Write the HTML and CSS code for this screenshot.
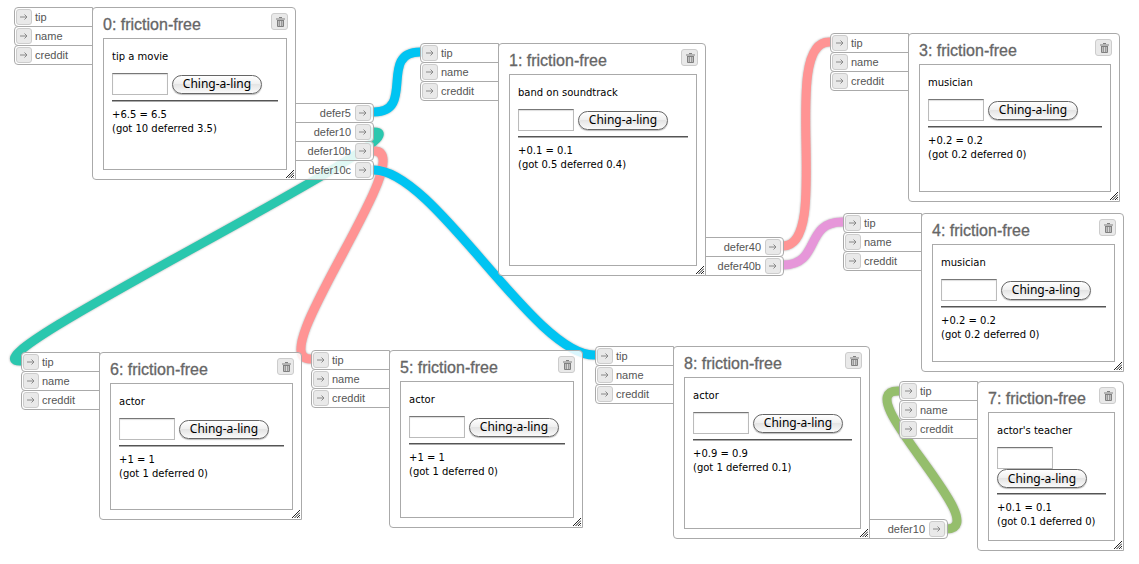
FILE: index.html
```html
<!DOCTYPE html>
<html lang="en">
<head>
<meta charset="utf-8">
<title>friction-free</title>
<link rel="stylesheet" href="styles.css">
</head>
<body>
<svg class="symbols" aria-hidden="true">
  <symbol id="arrow" viewBox="0 0 8 8"><path d="M0 4h7M4.500 1.500L7 4L4.500 6.500" fill="none" stroke="#888" stroke-width="1"/></symbol>
  <symbol id="trash" viewBox="0 0 9 10"><path d="M0 1.500h9v1H0zM3 0h3v1H3zM1 3h7v6.200L7.300 10H1.700L1 9.200z" fill="#808080"/><path d="M2.800 4v5M4.500 4v5M6.200 4v5" stroke="#eee" stroke-width=".8"/></symbol>
  <symbol id="grip" viewBox="0 0 8 8"><path d="M0 8L8 0M2.500 8L8 2.500M5 8L8 5M7 8.500L8.500 7" fill="none" stroke="#222" stroke-width="1"/></symbol>
</svg>
<main class="canvas">
  <svg class="wires" aria-hidden="true">
    <path class="teal" d="M364 132H374C434 132 -42 361 20 361H30"/>
    <path class="red" d="M364 151H374C422 151 262 359 310 359H320"/>
    <path class="blue" d="M364 112H374C416 112 378 52 420 52H429"/>
    <path class="blue" d="M364 170H374C434 170 534 355 594 355H604"/>
    <path class="red" d="M773 246H783C833 246 779 42 829 42H839"/>
    <path class="pink" d="M773 265H783C821 265 804 222 842 222H852"/>
    <path class="green" d="M936 529H946C998 529 846 391 898 391H908"/>
  </svg>

  <section class="node node-0">
    <div class="ports ins">
      <label class="port"><button><svg><use href="#arrow"/></svg></button>tip</label>
      <label class="port"><button><svg><use href="#arrow"/></svg></button>name</label>
      <label class="port"><button><svg><use href="#arrow"/></svg></button>creddit</label>
    </div>
    <div class="module">
      <header><h2>0: friction-free</h2><button class="trash" aria-label="Delete"><svg><use href="#trash"/></svg></button></header>
      <div class="frame">
        <label class="caption" for="amount-0">tip a movie</label>
        <div class="pay"><input type="text" id="amount-0"><button class="ching">Ching-a-ling</button></div>
        <hr>
        <p>+6.5 = 6.5<br>(got 10 deferred 3.5)</p>
      </div>
      <svg class="grip"><use href="#grip"/></svg>
    </div>
    <div class="ports outs">
      <label class="port">defer5<button><svg><use href="#arrow"/></svg></button></label>
      <label class="port">defer10<button><svg><use href="#arrow"/></svg></button></label>
      <label class="port">defer10b<button><svg><use href="#arrow"/></svg></button></label>
      <label class="port">defer10c<button><svg><use href="#arrow"/></svg></button></label>
    </div>
  </section>

  <section class="node node-1">
    <div class="ports ins">
      <label class="port"><button><svg><use href="#arrow"/></svg></button>tip</label>
      <label class="port"><button><svg><use href="#arrow"/></svg></button>name</label>
      <label class="port"><button><svg><use href="#arrow"/></svg></button>creddit</label>
    </div>
    <div class="module">
      <header><h2>1: friction-free</h2><button class="trash" aria-label="Delete"><svg><use href="#trash"/></svg></button></header>
      <div class="frame">
        <label class="caption" for="amount-1">band on soundtrack</label>
        <div class="pay"><input type="text" id="amount-1"><button class="ching">Ching-a-ling</button></div>
        <hr>
        <p>+0.1 = 0.1<br>(got 0.5 deferred 0.4)</p>
      </div>
      <svg class="grip"><use href="#grip"/></svg>
    </div>
    <div class="ports outs">
      <label class="port">defer40<button><svg><use href="#arrow"/></svg></button></label>
      <label class="port">defer40b<button><svg><use href="#arrow"/></svg></button></label>
    </div>
  </section>

  <section class="node node-3">
    <div class="ports ins">
      <label class="port"><button><svg><use href="#arrow"/></svg></button>tip</label>
      <label class="port"><button><svg><use href="#arrow"/></svg></button>name</label>
      <label class="port"><button><svg><use href="#arrow"/></svg></button>creddit</label>
    </div>
    <div class="module">
      <header><h2>3: friction-free</h2><button class="trash" aria-label="Delete"><svg><use href="#trash"/></svg></button></header>
      <div class="frame">
        <label class="caption" for="amount-3">musician</label>
        <div class="pay"><input type="text" id="amount-3"><button class="ching">Ching-a-ling</button></div>
        <hr>
        <p>+0.2 = 0.2<br>(got 0.2 deferred 0)</p>
      </div>
      <svg class="grip"><use href="#grip"/></svg>
    </div>
  </section>

  <section class="node node-4">
    <div class="ports ins">
      <label class="port"><button><svg><use href="#arrow"/></svg></button>tip</label>
      <label class="port"><button><svg><use href="#arrow"/></svg></button>name</label>
      <label class="port"><button><svg><use href="#arrow"/></svg></button>creddit</label>
    </div>
    <div class="module">
      <header><h2>4: friction-free</h2><button class="trash" aria-label="Delete"><svg><use href="#trash"/></svg></button></header>
      <div class="frame">
        <label class="caption" for="amount-4">musician</label>
        <div class="pay"><input type="text" id="amount-4"><button class="ching">Ching-a-ling</button></div>
        <hr>
        <p>+0.2 = 0.2<br>(got 0.2 deferred 0)</p>
      </div>
      <svg class="grip"><use href="#grip"/></svg>
    </div>
  </section>

  <section class="node node-5">
    <div class="ports ins">
      <label class="port"><button><svg><use href="#arrow"/></svg></button>tip</label>
      <label class="port"><button><svg><use href="#arrow"/></svg></button>name</label>
      <label class="port"><button><svg><use href="#arrow"/></svg></button>creddit</label>
    </div>
    <div class="module">
      <header><h2>5: friction-free</h2><button class="trash" aria-label="Delete"><svg><use href="#trash"/></svg></button></header>
      <div class="frame">
        <label class="caption" for="amount-5">actor</label>
        <div class="pay"><input type="text" id="amount-5"><button class="ching">Ching-a-ling</button></div>
        <hr>
        <p>+1 = 1<br>(got 1 deferred 0)</p>
      </div>
      <svg class="grip"><use href="#grip"/></svg>
    </div>
  </section>

  <section class="node node-6">
    <div class="ports ins">
      <label class="port"><button><svg><use href="#arrow"/></svg></button>tip</label>
      <label class="port"><button><svg><use href="#arrow"/></svg></button>name</label>
      <label class="port"><button><svg><use href="#arrow"/></svg></button>creddit</label>
    </div>
    <div class="module">
      <header><h2>6: friction-free</h2><button class="trash" aria-label="Delete"><svg><use href="#trash"/></svg></button></header>
      <div class="frame">
        <label class="caption" for="amount-6">actor</label>
        <div class="pay"><input type="text" id="amount-6"><button class="ching">Ching-a-ling</button></div>
        <hr>
        <p>+1 = 1<br>(got 1 deferred 0)</p>
      </div>
      <svg class="grip"><use href="#grip"/></svg>
    </div>
  </section>

  <section class="node node-7">
    <div class="ports ins">
      <label class="port"><button><svg><use href="#arrow"/></svg></button>tip</label>
      <label class="port"><button><svg><use href="#arrow"/></svg></button>name</label>
      <label class="port"><button><svg><use href="#arrow"/></svg></button>creddit</label>
    </div>
    <div class="module">
      <header><h2>7: friction-free</h2><button class="trash" aria-label="Delete"><svg><use href="#trash"/></svg></button></header>
      <div class="frame">
        <label class="caption" for="amount-7">actor's teacher</label>
        <div class="pay"><input type="text" id="amount-7"><button class="ching">Ching-a-ling</button></div>
        <hr>
        <p>+0.1 = 0.1<br>(got 0.1 deferred 0)</p>
      </div>
      <svg class="grip"><use href="#grip"/></svg>
    </div>
  </section>

  <section class="node node-8">
    <div class="ports ins">
      <label class="port"><button><svg><use href="#arrow"/></svg></button>tip</label>
      <label class="port"><button><svg><use href="#arrow"/></svg></button>name</label>
      <label class="port"><button><svg><use href="#arrow"/></svg></button>creddit</label>
    </div>
    <div class="module">
      <header><h2>8: friction-free</h2><button class="trash" aria-label="Delete"><svg><use href="#trash"/></svg></button></header>
      <div class="frame">
        <label class="caption" for="amount-8">actor</label>
        <div class="pay"><input type="text" id="amount-8"><button class="ching">Ching-a-ling</button></div>
        <hr>
        <p>+0.9 = 0.9<br>(got 1 deferred 0.1)</p>
      </div>
      <svg class="grip"><use href="#grip"/></svg>
    </div>
    <div class="ports outs">
      <label class="port">defer10<button><svg><use href="#arrow"/></svg></button></label>
    </div>
  </section>
</main>
</body>
</html>
```
FILE: styles.css
```css
* { box-sizing: border-box; }

body {
  margin: 0;
  background: #fff;
  font-family: "DejaVu Sans", Verdana, sans-serif;
  font-size: 10px;
  line-height: 14px;
  color: #000;
}

button { padding: 0; cursor: pointer; }

.symbols { position: absolute; width: 0; height: 0; }

.canvas { position: relative; min-height: 100vh; }

/* Wires between ports */
.wires {
  position: absolute;
  inset: 0;
  width: 100%;
  height: 100%;
  overflow: visible;
  fill: none;
  stroke-width: 9;
  filter: drop-shadow(0 0 1px #aaa);
}
.teal { stroke: #2ac7ae; }
.red { stroke: #ff9494; }
.blue { stroke: #00c4f2; }
.pink { stroke: #e696d9; }
.green { stroke: #95be6c; }

/* Nodes on the canvas */
.node { position: absolute; display: flex; align-items: flex-start; }
.node-0 { left: 14px; top: 7px; }
.node-1 { left: 420px; top: 43px; }
.node-3 { left: 830px; top: 33px; }
.node-4 { left: 843px; top: 213px; }
.node-5 { left: 311px; top: 350px; }
.node-6 { left: 21px; top: 352px; }
.node-7 { left: 899px; top: 381px; }
.node-8 { left: 595px; top: 346px; }

/* User-resizable module sizes */
.node-0 .module { width: 204px; height: 173px; }
.node-1 .module { width: 208px; height: 233px; }
.node-3 .module { width: 212px; height: 169px; }
.node-4 .module { width: 203px; height: 159px; }
.node-5 .module { width: 194px; height: 178px; }
.node-6 .module { width: 203px; height: 168px; }
.node-7 .module { width: 147px; height: 170px; }
.node-8 .module { width: 197px; height: 193px; }

.module {
  position: relative;
  display: flex;
  flex-direction: column;
  padding: 0 8px 9px 10px;
  border: 1px solid #aaa;
  border-radius: 4px 4px 0 4px;
  background: rgba(255, 255, 255, .85);
}

header {
  display: flex;
  justify-content: space-between;
  align-items: flex-start;
  height: 30px;
  margin-right: -1px;
  padding-top: 5px;
}

h2 {
  margin: 0;
  font: 16px/24px "Liberation Sans", Arial, sans-serif;
  color: #666;
  -webkit-text-stroke: 0.3px #666;
  white-space: nowrap;
}

.trash, .port button {
  display: flex;
  align-items: center;
  justify-content: center;
  flex: none;
  border: 1px solid #ccc;
  border-radius: 3px;
  background: #e9e9e9;
}
.trash { width: 17px; height: 17px; padding: 1px 0 0 1px; }
.trash svg { width: 9px; height: 10px; }

.frame {
  flex: 1;
  padding: 11px 8px 8px;
  border: 1px solid #aaa;
  background: #fff;
}

.caption { display: block; margin-bottom: 9px; }

.pay { display: flex; flex-wrap: wrap; align-items: center; column-gap: 4px; }
.pay input {
  width: 56px;
  height: 22px;
  padding: 2px;
  border: 1px solid #bbb;
  border-top-color: #777;
  background: #fff;
  box-shadow: inset 0 1px 1px #ddd;
  font: inherit;
}
.ching {
  height: 19px;
  width: 90px;
  border: 1px solid #666;
  border-radius: 10px;
  background: linear-gradient(#fff, #f0f0f0 45%, #e4e4e4 50%, #fafafa);
  box-shadow: 0 1px 1px #bbb;
  font: 12px/16px "Noto Sans", sans-serif;
  color: #000;
}

hr {
  height: 2px;
  margin: 5px 0 6px;
  border: 0;
  border-top: 1px solid #555;
  background: #aaa;
}

p { margin: 0; white-space: nowrap; }

.grip { position: absolute; right: 1px; bottom: 1px; width: 8px; height: 8px; }

/* Ports */
.ports { display: flex; flex-direction: column; width: 79px; }
.ins { margin-right: -1px; }
.outs { margin-left: -1px; align-self: flex-end; }

.port {
  display: flex;
  align-items: center;
  gap: 3px;
  height: 20px;
  padding: 0 1px;
  border: 1px solid #aaa;
  background: rgba(255, 255, 255, .85);
  font: 11px/16px "Liberation Sans", Arial, sans-serif;
  color: #555;
}
.port + .port { margin-top: -1px; }
.port button { width: 16px; height: 16px; }
.port svg { width: 8px; height: 8px; }
.ins .port { border-radius: 4px 0 0 4px; }
.outs .port { justify-content: flex-end; gap: 4px; border-radius: 0 4px 4px 0; padding-right: 2px; }
```
